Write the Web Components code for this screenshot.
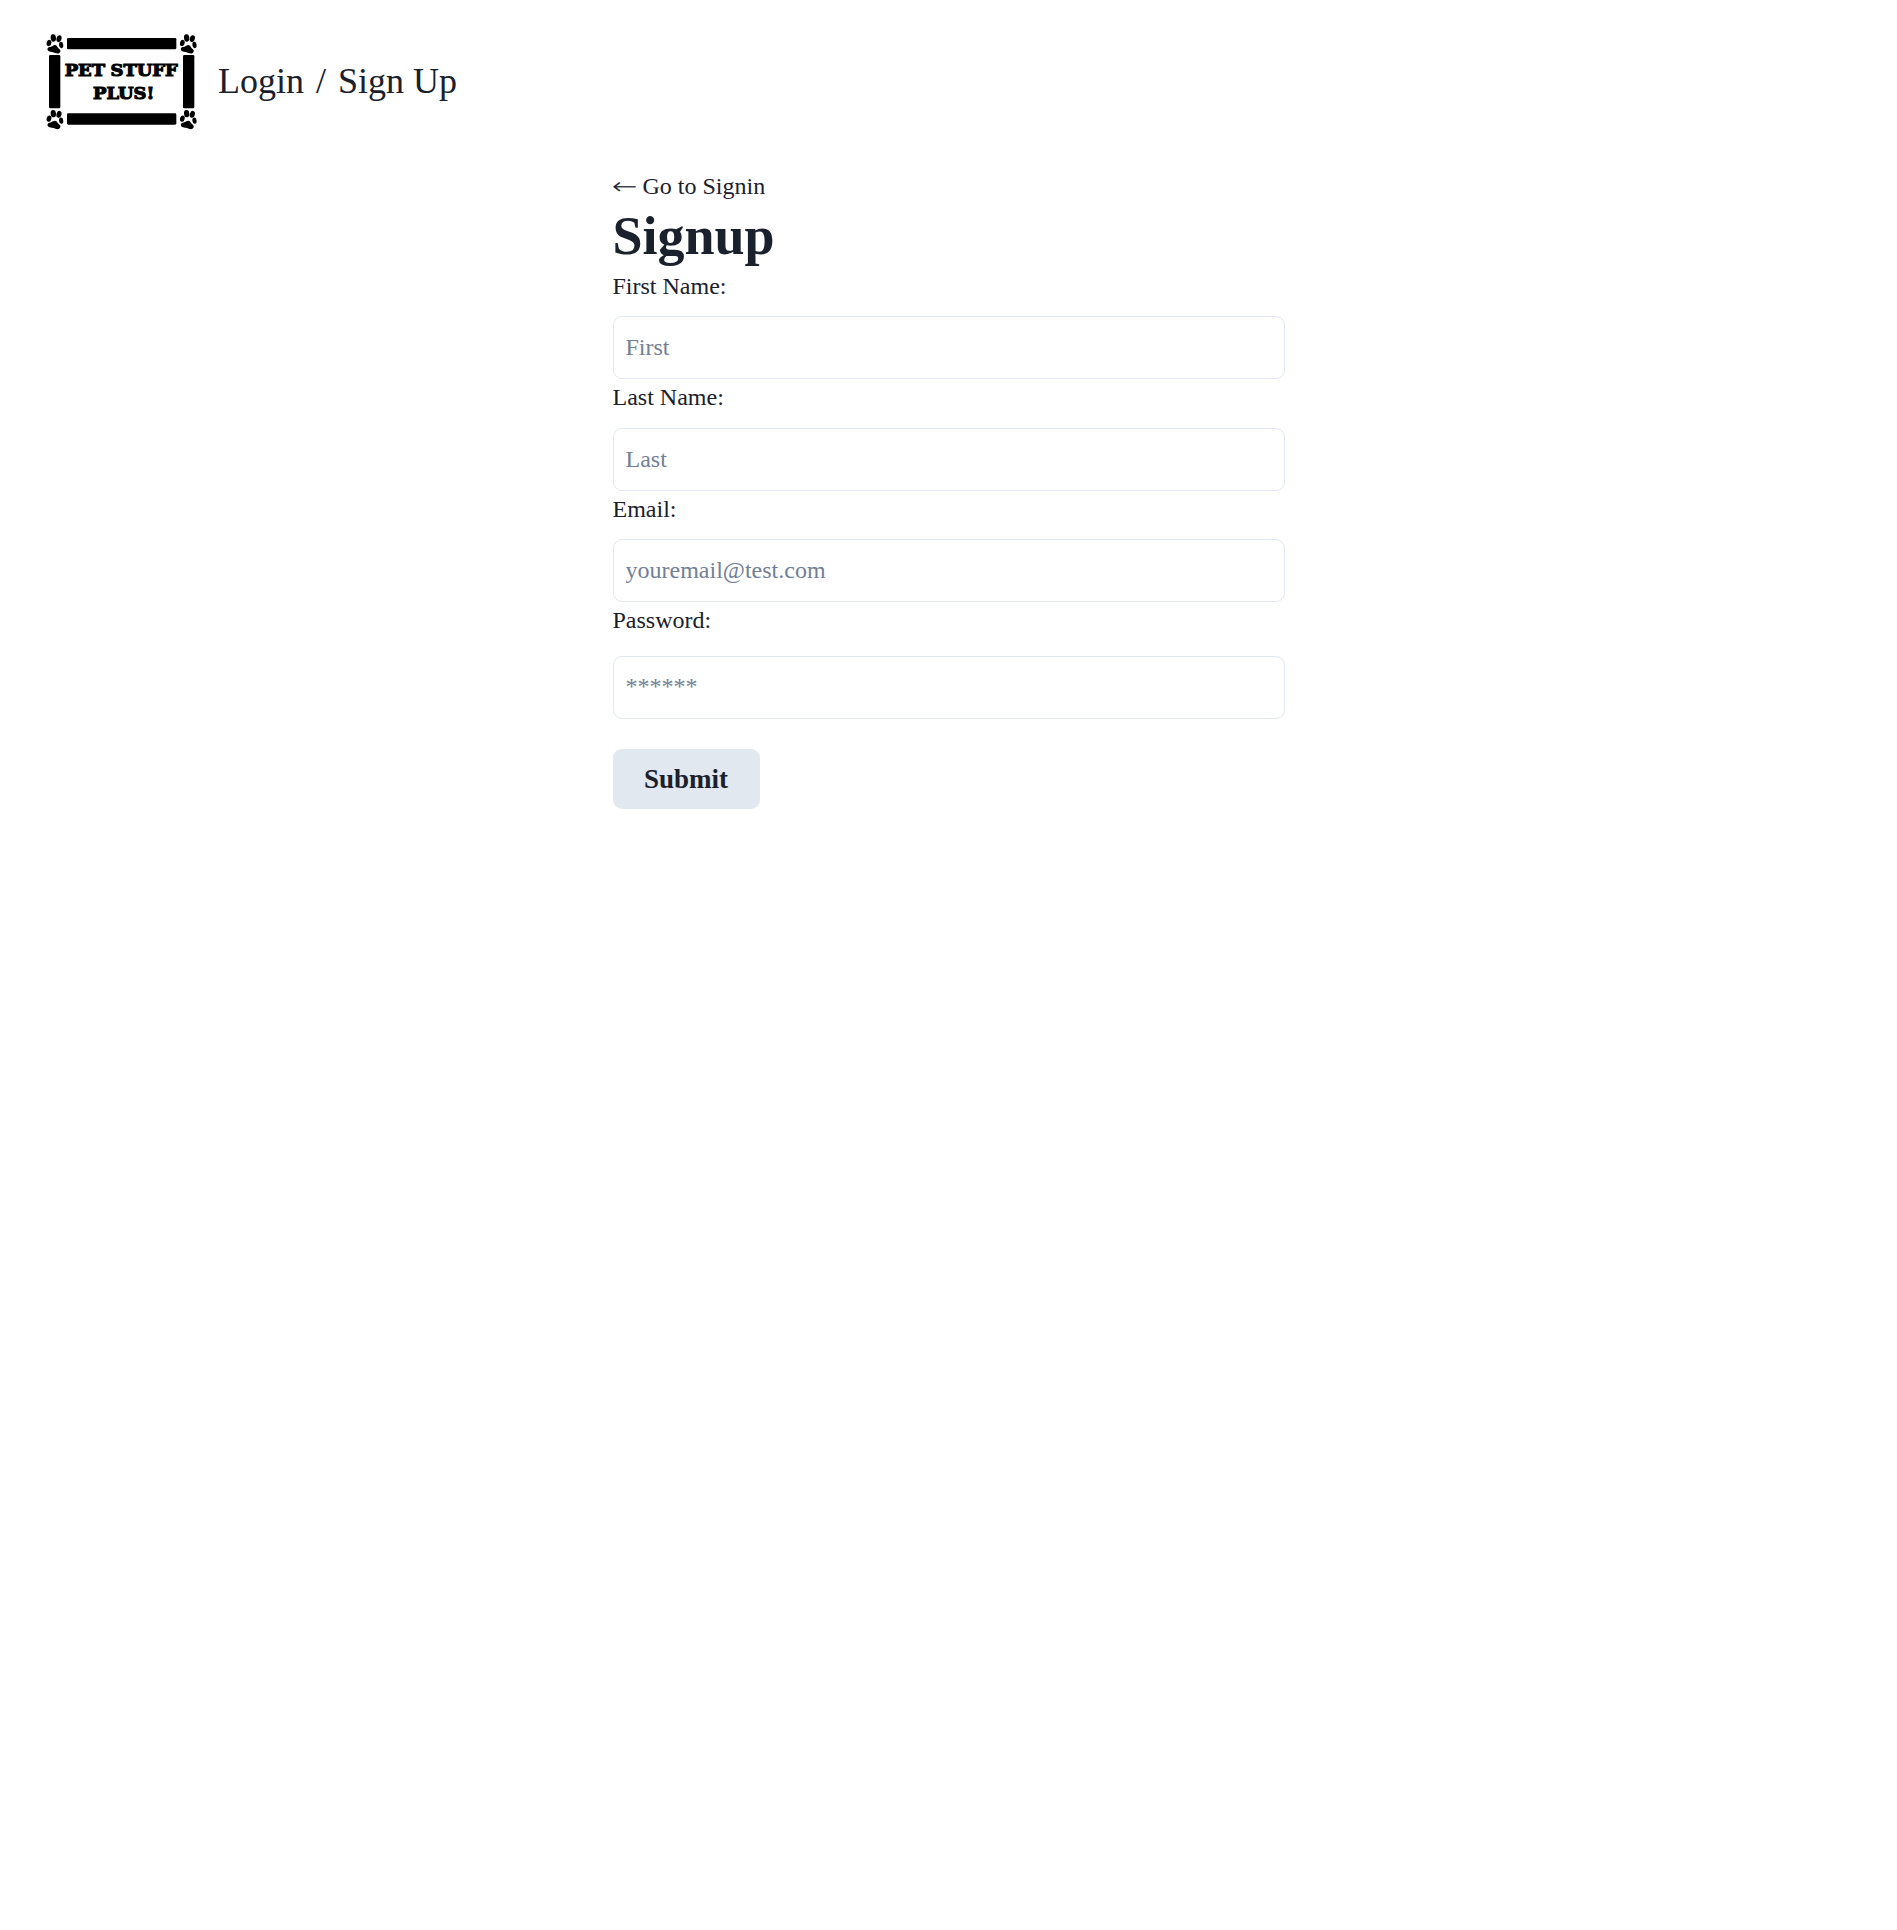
<!DOCTYPE html>
<html lang="en"><head><meta charset="utf-8"><title>Pet Stuff Plus</title>
<style>
body{margin:0;background:#fff;color:#1a202c;font:24px/36px "Liberation Serif","Times New Roman",serif}
</style></head><body>
<shop-header></shop-header>
<signup-form>
<form-field label="First Name:" placeholder="First"></form-field>
<form-field label="Last Name:" placeholder="Last" style="--gap:13px"></form-field>
<form-field label="Email:" placeholder="youremail@test.com"></form-field>
<form-field label="Password:" placeholder="******" type="password" style="--gap:18px"></form-field>
</signup-form>
<script>
class ShopLogo extends HTMLElement{
  constructor(){super();this.attachShadow({mode:'open'}).innerHTML=`
<style>:host{display:block;width:180px;height:120px}svg{display:block}text{font:bold 48px "DejaVu Serif",serif;stroke:#000;stroke-width:3.2;word-spacing:-2px}</style>
<svg width="180" height="120" viewBox="0 0 540 360">
<defs><g id="paw">
<ellipse cx="20" cy="11" rx="8" ry="11" transform="rotate(-6 20 11)"/>
<ellipse cx="37" cy="13" rx="7.5" ry="10.5" transform="rotate(14 37 13)"/>
<ellipse cx="7" cy="26" rx="7" ry="9.5" transform="rotate(14 7 26)"/>
<ellipse cx="43.500" cy="32" rx="6.3" ry="9.500" transform="rotate(-6 43.500 32)"/>
<path d="M19 34C26 29 31 34 34 40C37 44 43 46 41 52C38 59 31 58 26 56C20 53 13 54 7 51C0 47 2 39 8 38C13 38 14 36 19 34Z"/>
</g></defs>
<rect x="111" y="54" width="328" height="34" rx="4"/><rect x="111" y="280" width="328" height="34" rx="4"/>
<rect x="57" y="105" width="34" height="160" rx="4"/><rect x="459" y="105" width="34" height="160" rx="4"/>
<use href="#paw" x="50" y="43"/><use href="#paw" x="450" y="43"/><use href="#paw" x="50" y="270"/><use href="#paw" x="450" y="270"/>
<text x="104" y="168" textLength="339" lengthAdjust="spacingAndGlyphs">PET STUFF</text>
<text x="189" y="237" textLength="184" lengthAdjust="spacingAndGlyphs">PLUS!</text>
</svg>`}}
customElements.define('shop-logo',ShopLogo);

class ShopHeader extends HTMLElement{
  constructor(){super();this.attachShadow({mode:'open'}).innerHTML=`
<style>:host{display:flex;align-items:center;gap:8px;padding:20px 30px 28px}
nav{display:flex;gap:12px;font-size:36px;line-height:54px;padding-top:1px}a{color:inherit;text-decoration:none}</style>
<shop-logo></shop-logo><nav><a href="#login">Login</a><span>/</span><a href="#signup">Sign Up</a></nav>`}}
customElements.define('shop-header',ShopHeader);

class FormField extends HTMLElement{
  constructor(){super();this.attachShadow({mode:'open'}).innerHTML=`
<style>:host{display:flex;flex-direction:column;gap:var(--gap,12px)}
label{display:block}input{box-sizing:border-box;width:100%;height:63px;padding:0 12px;margin:0;border:1px solid #e2e8f0;border-radius:9px;background:#fff;font:inherit;color:inherit;outline:none}
input[type=password]{padding-bottom:2px}
input::placeholder{color:#718096;opacity:1}</style><label for="field"></label><input id="field">`}
  connectedCallback(){
    const input=this.shadowRoot.querySelector('input');
    this.shadowRoot.querySelector('label').textContent=this.getAttribute('label');
    input.placeholder=this.getAttribute('placeholder');
    input.type=this.getAttribute('type')||'text';
  }}
customElements.define('form-field',FormField);

class SignupForm extends HTMLElement{
  constructor(){super();this.attachShadow({mode:'open'}).innerHTML=`
<style>:host{display:block;width:672px;margin:0 auto}
a{display:flex;gap:6px;color:inherit;text-decoration:none}
.arrow{display:flex;justify-content:center;width:24px;font:200 30px/36px "DejaVu Sans",sans-serif;-webkit-text-stroke:.3px;transform:translateY(.5px) scaleY(.75)}
h1{margin:0;font-size:54px;line-height:64px;font-weight:700}
button{display:flex;align-items:center;justify-content:center;width:147px;height:60px;margin-top:30px;padding:0;border:0;border-radius:9px;background:#e2e8f0;color:inherit;font:bold 27px/32px "Liberation Serif",serif}</style>
<a href="#signin"><span class="arrow">←</span><span>Go to Signin</span></a><h1>Signup</h1><slot></slot><button type="submit">Submit</button>`}}
customElements.define('signup-form',SignupForm);
</script></body></html>
